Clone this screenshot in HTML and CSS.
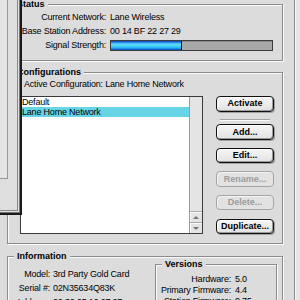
FILE: index.html
```html
<!DOCTYPE html>
<html>
<head>
<meta charset="utf-8">
<link rel="stylesheet" href="styles.css">
</head>
<body>
<div class="main">
  <fieldset class="group status">
    <legend>Status</legend>
    <div class="rows status-rows">
      <span class="lbl">Current Network:</span><span>Lane Wireless</span>
      <span class="lbl">Base Station Address:</span><span>00 14 BF 22 27 29</span>
      <span class="lbl">Signal Strength:</span><div class="meter"><div class="fill" style="width:44%"></div></div>
    </div>
  </fieldset>

  <fieldset class="group configs">
    <legend>Configurations</legend>
    <div class="active">Active Configuration: Lane Home Network</div>
    <div class="config-body">
      <div class="list">
        <ul class="items">
          <li>Default</li>
          <li class="sel">Lane Home Network</li>
        </ul>
        <div class="scroll">
          <div class="track"></div>
          <div class="arrow"><span class="tri up"></span></div>
          <div class="arrow"><span class="tri down"></span></div>
        </div>
      </div>
      <div class="buttons">
        <button class="btn">Activate</button>
        <div class="sep"></div>
        <button class="btn">Add...</button>
        <button class="btn">Edit...</button>
        <button class="btn" disabled>Rename...</button>
        <button class="btn" disabled>Delete...</button>
        <button class="btn last">Duplicate...</button>
      </div>
    </div>
  </fieldset>

  <fieldset class="group info">
    <legend>Information</legend>
    <div class="info-body">
      <div class="rows info-rows">
        <span class="lbl">Model:</span><span>3rd Party Gold Card</span>
        <span class="lbl">Serial #:</span><span>02N35634Q83K</span>
        <span class="lbl">Address:</span><span>00 30 65 16 07 27</span>
      </div>
      <fieldset class="group versions">
        <legend>Versions</legend>
        <div class="rows ver-rows">
          <span class="lbl">Hardware:</span><span>5.0</span>
          <span class="lbl">Primary Firmware:</span><span>4.4</span>
          <span class="lbl">Station Firmware:</span><span>0.75</span>
        </div>
      </fieldset>
    </div>
  </fieldset>

  <div class="behind">
    <div class="behind-frame">
      <div class="behind-box"></div>
    </div>
  </div>
</div>
</body>
</html>
```

FILE: styles.css
```css
* { box-sizing: border-box; }
html, body { margin: 0; padding: 0; }
body {
  width: 300px;
  height: 300px;
  overflow: hidden;
  background: #e6e6e6;
  font-family: "Liberation Sans", Arial, sans-serif;
  font-size: 9px;
  letter-spacing: -0.2px;
  color: #000;
}
.main {
  position: relative;
  width: 295px;
  height: 300px;
  padding: 0 11px 0 7px;
  background: #dcdcdc;
  border-right: 1px solid #8e8e8e;
  box-shadow: 1px 0 0 #f4f4f4;
}
.group {
  margin: 0;
  padding: 0;
  min-width: 0;
  border: 1px solid #8c8c8c;
  box-shadow: 1px 1px 0 #fafafa, inset 1px 1px 0 #fafafa;
}
.group > legend {
  margin-left: 6px;
  padding: 0 3px;
  height: 8px;
  line-height: 8px;
  font-weight: bold;
  letter-spacing: 0;
  background: #dcdcdc;
}
.rows {
  display: grid;
  align-items: center;
}
.lbl { text-align: right; }

/* status */
.status { height: 61px; padding-top: 2px; }
.status-rows {
  grid-template-columns: 98px 1fr;
  column-gap: 4px;
  grid-auto-rows: 14px;
  line-height: 14px;
}
.meter {
  width: 163px;
  height: 11px;
  border: 1px solid #3c3c3c;
  background: #a8a8a8;
  box-shadow: inset 1px 1px 0 #8a8a8a;
}
.fill {
  height: 100%;
  border-right: 1px solid #000;
  background: linear-gradient(#0b3fb8 0, #1e74e0 12%, #5fe0ff 35%, #3cc8f6 65%, #1b8fe6 85%, #0b3fb8 100%);
}

/* configurations */
.configs {
  margin-top: 7px;
  height: 176px;
  padding: 3px 0 0 0;
}
.active {
  margin-left: 16px;
  line-height: 10px;
  margin-bottom: 7px;
}
.config-body {
  display: flex;
  margin-left: 12px;
}
.list {
  display: flex;
  width: 183px;
  height: 138px;
  border: 1px solid #3a3a3a;
  background: #fff;
}
.items {
  flex: 1;
  margin: 0;
  padding: 0;
  list-style: none;
}
.items li {
  height: 10px;
  line-height: 10px;
  padding-left: 1px;
}
.items li.sel { background: #66d4e4; }
.scroll {
  width: 13px;
  display: flex;
  flex-direction: column;
  border-left: 1px solid #9a9a9a;
  background: #e4e4e4;
}
.track { flex: 1; }
.arrow {
  height: 11px;
  border-top: 1px solid #a8a8a8;
  box-shadow: inset 1px 1px 0 #fafafa;
  display: flex;
  align-items: center;
  justify-content: center;
}
.tri {
  width: 0;
  height: 0;
  border-left: 3px solid transparent;
  border-right: 3px solid transparent;
}
.tri.up { border-bottom: 3px solid #777; }
.tri.down { border-top: 3px solid #777; }

.buttons {
  margin-left: 13px;
  width: 58px;
  height: 138px;
  display: flex;
  flex-direction: column;
}
.btn {
  display: block;
  width: 58px;
  height: 16px;
  margin: 0 0 8px 0;
  padding: 0;
  border: 1px solid #111;
  border-radius: 4px;
  background: linear-gradient(#f6f6f6, #e2e2e2);
  box-shadow: inset -1px -1px 0 #9a9a9a, inset 1px 1px 0 #fff, 1px 1px 0 #a0a0a0;
  font-family: "Liberation Sans", Arial, sans-serif;
  font-size: 9px;
  font-weight: bold;
  line-height: 13px;
  color: #000;
}
.btn:disabled {
  border-color: #a4a4a4;
  color: #9c9c9c;
  background: #e2e2e2;
  box-shadow: inset 1px 1px 0 #f4f4f4;
}
.btn.last { margin: auto 0 0 0; }
.sep {
  margin: -1px 4px 5px 4px;
  height: 1px;
  background: #a4a4a4;
  box-shadow: 0 1px 0 #fafafa;
}

/* information */
.info {
  margin-top: 8px;
  height: 80px;
  padding: 0;
}
.info-body { display: flex; }
.info-rows {
  margin-top: 7px;
  width: 147px;
  grid-template-columns: 42px 1fr;
  column-gap: 3px;
  grid-auto-rows: 14px;
  line-height: 14px;
  align-self: flex-start;
}
.versions {
  width: 122px;
  height: 60px;
  padding: 6px 0 0 0;
}
.ver-rows {
  grid-template-columns: 75px 1fr;
  column-gap: 4px;
  grid-auto-rows: 11px;
  line-height: 11px;
}

/* window lying over the left edge */
.behind {
  position: absolute;
  left: 0;
  top: 0;
  width: 22px;
  height: 215px;
  background: #dedede;
  border-right: 2px solid #1a1a1a;
  border-bottom: 2px solid #1a1a1a;
  box-shadow: inset -1px -1px 0 #777;
}
.behind-frame {
  width: 18px;
  height: 211px;
  border-right: 1px solid #8a8a8a;
  border-bottom: 1px solid #8a8a8a;
}
.behind-box {
  width: 8px;
  height: 179px;
  border-right: 1px solid #999;
  border-bottom: 1px solid #999;
  background: #e4e4e4;
}
```
